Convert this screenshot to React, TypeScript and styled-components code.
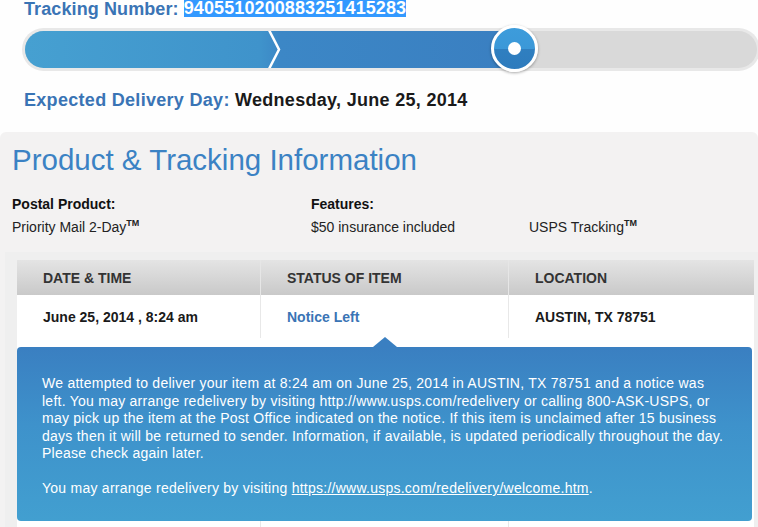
import React from "react";
import styled, { createGlobalStyle } from "styled-components";

const Global = createGlobalStyle`
  html, body { margin: 0; padding: 0; }
  body {
    background: #fefefe;
    font-family: "Liberation Sans", Arial, sans-serif;
    overflow: hidden;
    width: 758px;
    height: 527px;
  }
`;

const Page = styled.div`
  width: 758px;
  overflow: hidden;
`;

const Top = styled.div`
  padding-left: 24px;
`;

const TrackingLine = styled.div`
  height: 18px;
  font-size: 18px;
  line-height: 18px;
  font-weight: bold;
  color: #3a74b5;
  white-space: nowrap;
  letter-spacing: 0.1px;
`;

const Selected = styled.span`
  display: inline-block;
  background: #3399ff;
  color: #ffffff;
  line-height: 17px;
  height: 17px;
  vertical-align: top;
`;

const Bar = styled.div`
  position: relative;
  margin-top: 10px;
  margin-left: -2px;
  width: 738px;
  height: 43px;
  box-sizing: border-box;
  padding: 3px;
  border-radius: 22px;
  background: #e8e8e8;
  display: flex;
`;

const BarInner = styled.div`
  flex: 1;
  display: flex;
  border-radius: 19px;
  background: #d9d9d9;
  overflow: hidden;
`;

const Fill = styled.div`
  height: 100%;
  background: linear-gradient(
    to right,
    #46a0d1 0%,
    #3f93cb 48%,
    #3c87c6 52%,
    #3a7fc1 100%
  );
`;

const Chevron = styled.svg`
  position: absolute;
  left: 244px;
  top: 3px;
`;

const Knob = styled.div`
  position: absolute;
  left: 469px;
  top: -3px;
  width: 47px;
  height: 47px;
  box-sizing: border-box;
  border-radius: 50%;
  border: 3px solid #ffffff;
  box-shadow: 0 1px 3px rgba(0, 0, 0, 0.35);
  background: linear-gradient(to bottom, #3d9cdb 0%, #3b98d8 52%, #2f7fc0 52%, #2e7bbd 100%);
  display: flex;
  align-items: center;
  justify-content: center;
`;

const KnobDot = styled.div`
  width: 13px;
  height: 13px;
  border-radius: 50%;
  background: #ffffff;
`;

const Expected = styled.div`
  margin-top: 18px;
  font-size: 18px;
  line-height: 22px;
  font-weight: bold;
  letter-spacing: 0.3px;
  color: #3a74b5;
  white-space: nowrap;
`;

const ExpectedDate = styled.span`
  color: #1a1a1a;
`;

const Info = styled.section`
  margin-top: 21px;
  background: #f3f2f2;
  border-radius: 6px 6px 0 0;
  padding: 11px 0 0 0;
`;

const Title = styled.h1`
  margin: 0;
  padding-left: 12px;
  font-size: 29.5px;
  line-height: 34px;
  font-weight: normal;
  color: #3b82c4;
  white-space: nowrap;
`;

const ProductGrid = styled.div`
  margin-top: 16px;
  padding-left: 12px;
  display: grid;
  grid-template-columns: 299px 218px 1fr;
  font-size: 14px;
  line-height: 23px;
  color: #222;
`;

const Label = styled.div<{ $span?: number }>`
  font-weight: bold;
  color: #111;
  grid-column: ${(p) => (p.$span ? `span ${p.$span}` : "auto")};
`;

const Value = styled.div`
  white-space: nowrap;
`;

const Sup = styled.sup`
  font-size: 9px;
  line-height: 0;
  vertical-align: 6px;
  font-weight: bold;
`;

const TableWrap = styled.div`
  margin-top: 13px;
  margin-left: 5px;
  padding: 8px 4px 0 12px;
  background: #efefef;
`;

const Table = styled.div`
  display: grid;
  grid-template-columns: 244px 248px 245px;
`;

const HeadCell = styled.div<{ $last?: boolean }>`
  height: 35px;
  display: flex;
  align-items: center;
  padding-left: 26px;
  background: linear-gradient(to bottom, #e4e4e4, #c9c9c9);
  border-right: ${(p) => (p.$last ? "none" : "1px solid #e6e6e6")};
  font-size: 14px;
  font-weight: bold;
  color: #333;
  text-transform: uppercase;
  white-space: nowrap;
`;

const Cell = styled.div<{ $last?: boolean; $link?: boolean; $h?: number }>`
  height: ${(p) => p.$h ?? 43}px;
  display: flex;
  align-items: center;
  padding-left: 26px;
  background: #ffffff;
  border-right: ${(p) => (p.$last ? "none" : "1px solid #e8e8e8")};
  font-size: 14px;
  font-weight: bold;
  color: ${(p) => (p.$link ? "#3a74b5" : "#1a1a1a")};
  white-space: nowrap;
`;

const DetailRow = styled.div`
  grid-column: 1 / -1;
  background: #ffffff;
  padding: 9px 2px 0 0;
`;

const Detail = styled.div`
  position: relative;
  box-sizing: border-box;
  height: 174px;
  padding: 28px 26px 0 25px;
  border-radius: 4px;
  background: linear-gradient(to bottom, #3a7fc1 0%, #3e92cb 45%, #429fd0 100%);
  color: #ffffff;
  font-size: 14px;
  letter-spacing: 0.25px;
  line-height: 17.5px;

  &::before {
    content: "";
    position: absolute;
    left: 356px;
    top: -10px;
    border-left: 12px solid transparent;
    border-right: 12px solid transparent;
    border-bottom: 10px solid #3a7fc1;
  }
`;

const Para = styled.p`
  margin: 0 0 17.5px 0;
`;

const Link = styled.a`
  color: #ffffff;
  text-decoration: underline;
`;

const rows = [
  { date: "June 25, 2014 , 8:24 am", status: "Notice Left", location: "AUSTIN, TX 78751" },
];

export default function App() {
  const progress = 490;
  return (
    <Page>
      <Global />
      <Top>
        <TrackingLine>
          Tracking Number: <Selected>9405510200883251415283</Selected>
        </TrackingLine>
        <Bar>
          <BarInner>
            <Fill style={{ width: progress }} />
          </BarInner>
          <Chevron width="16" height="37" viewBox="0 0 16 37">
            <polyline
              points="3,-1 13,18.5 3,38"
              fill="none"
              stroke="#ffffff"
              strokeWidth="2.5"
            />
          </Chevron>
          <Knob>
            <KnobDot />
          </Knob>
        </Bar>
        <Expected>
          Expected Delivery Day: <ExpectedDate>Wednesday, June 25, 2014</ExpectedDate>
        </Expected>
      </Top>
      <Info>
        <Title>Product &amp; Tracking Information</Title>
        <ProductGrid>
          <Label>Postal Product:</Label>
          <Label $span={2}>Features:</Label>
          <Value>
            Priority Mail 2-Day<Sup>TM</Sup>
          </Value>
          <Value>$50 insurance included</Value>
          <Value>
            USPS Tracking<Sup>TM</Sup>
          </Value>
        </ProductGrid>
        <TableWrap>
          <Table>
            <HeadCell>Date &amp; Time</HeadCell>
            <HeadCell>Status of Item</HeadCell>
            <HeadCell $last>Location</HeadCell>
            {rows.map((r) => (
              <React.Fragment key={r.date}>
                <Cell>{r.date}</Cell>
                <Cell $link>{r.status}</Cell>
                <Cell $last>{r.location}</Cell>
              </React.Fragment>
            ))}
            <DetailRow>
              <Detail>
                <Para>
                  We attempted to deliver your item at 8:24 am on June 25, 2014 in AUSTIN, TX 78751 and a
                  notice was left. You may arrange redelivery by visiting http://www.usps.com/redelivery or
                  calling 800-ASK-USPS, or may pick up the item at the Post Office indicated on the notice.
                  If this item is unclaimed after 15 business days then it will be returned to sender.
                  Information, if available, is updated periodically throughout the day. Please check again
                  later.
                </Para>
                <Para>
                  You may arrange redelivery by visiting{" "}
                  <Link href="#">https://www.usps.com/redelivery/welcome.htm</Link>.
                </Para>
              </Detail>
            </DetailRow>
            <Cell $h={20} />
            <Cell $h={20} />
            <Cell $h={20} $last />
          </Table>
        </TableWrap>
      </Info>
    </Page>
  );
}
